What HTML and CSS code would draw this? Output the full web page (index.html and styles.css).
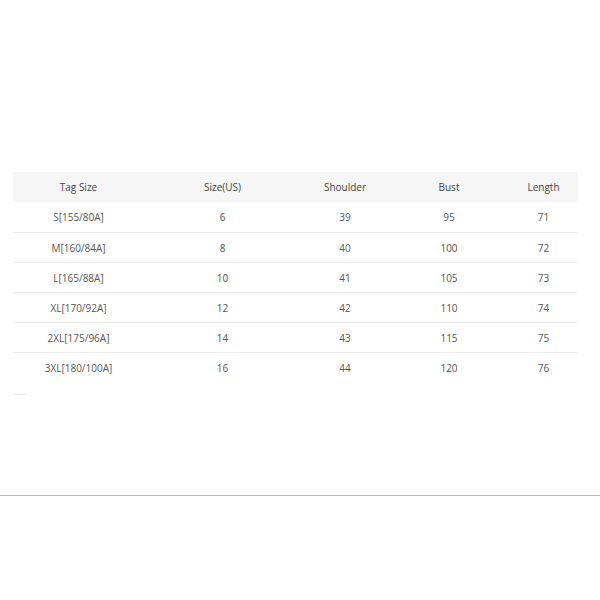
FILE: index.html
```html
<!DOCTYPE html>
<html>
<head>
<meta charset="utf-8">
<link rel="stylesheet" href="styles.css">
</head>
<body>
<div class="page">
  <table class="size-table">
    <colgroup>
      <col class="c1"><col class="c2"><col class="c3"><col class="c4"><col class="c5">
    </colgroup>
    <thead>
      <tr><th>Tag Size</th><th>Size(US)</th><th>Shoulder</th><th>Bust</th><th>Length</th></tr>
    </thead>
    <tbody>
      <tr><td>S[155/80A]</td><td>6</td><td>39</td><td>95</td><td>71</td></tr>
      <tr><td>M[160/84A]</td><td>8</td><td>40</td><td>100</td><td>72</td></tr>
      <tr><td>L[165/88A]</td><td>10</td><td>41</td><td>105</td><td>73</td></tr>
      <tr><td>XL[170/92A]</td><td>12</td><td>42</td><td>110</td><td>74</td></tr>
      <tr><td>2XL[175/96A]</td><td>14</td><td>43</td><td>115</td><td>75</td></tr>
      <tr><td>3XL[180/100A]</td><td>16</td><td>44</td><td>120</td><td>76</td></tr>
    </tbody>
  </table>
  <div class="tick"></div>
  <div class="rule"></div>
</div>
</body>
</html>
```
FILE: styles.css
```css
html, body {
  margin: 0;
  padding: 0;
  background: #fff;
}
.page {
  padding-top: 172px;
  font-family: "Open Sans", "Liberation Sans", sans-serif;
}
.size-table {
  margin-left: 13px;
  width: 565px;
  border-collapse: collapse;
  table-layout: fixed;
  font-size: 10px;
  color: #555;
}
.c1 { width: 131px; }
.c2 { width: 157px; }
.c3 { width: 88px; }
.c4 { width: 120px; }
.c5 { width: 69px; }
.size-table th {
  height: 30px;
  padding: 0;
  font-weight: normal;
  color: #444;
  background: #f6f6f6;
  text-align: center;
  vertical-align: middle;
}
.size-table td {
  height: 29px;
  padding: 0;
  text-align: center;
  vertical-align: middle;
  border-top: 1px solid #ededed;
}
.size-table tbody tr:first-child td {
  border-top: none;
  height: 30px;
}
.tick {
  margin: 12px 0 0 13px;
  width: 14px;
  height: 1px;
  background: #eee;
}
.rule {
  margin-top: 100px;
  height: 1px;
  background: #b8b8b8;
}
```
